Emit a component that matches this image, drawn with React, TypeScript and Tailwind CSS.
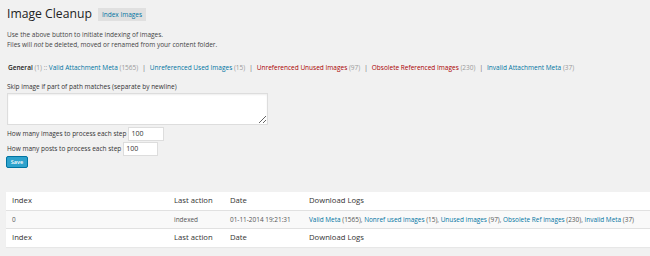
import React from 'react'

const font = { fontFamily: '"Open Sans", "Noto Sans", sans-serif' }

type Tab = { label: string; count: number; tone: 'blue' | 'red' }

const tabs: Tab[] = [
  { label: 'Unreferenced Used Images', count: 15, tone: 'blue' },
  { label: 'Unreferenced Unused Images', count: 97, tone: 'red' },
  { label: 'Obsolete Referenced Images', count: 230, tone: 'red' },
  { label: 'Invalid Attachment Meta', count: 37, tone: 'blue' },
]

const logs = [
  { label: 'Valid Meta', count: 1565 },
  { label: 'Nonref used images', count: 15 },
  { label: 'Unused images', count: 97 },
  { label: 'Obsolete Ref images', count: 230 },
  { label: 'Invalid Meta', count: 37 },
]

function HeaderRow() {
  return (
    <div className="grid grid-cols-[162px_56px_79px_1fr] h-[18px] items-center bg-white text-[7.7px] text-[#333]">
      <div className="pl-[6px]">Index</div>
      <div className="pl-[6px]">Last action</div>
      <div className="pl-[6px]">Date</div>
      <div className="pl-[6px]">Download Logs</div>
    </div>
  )
}

export default function App() {
  return (
    <div className="w-[650px] h-[256px] overflow-hidden bg-[#f1f1f1] text-[#444]" style={font}>
      {/* Title */}
      <div className="flex items-center pl-[7px] pt-[5px]">
        <h1 className="text-[12.2px] leading-[18px] text-[#222]">Image Cleanup</h1>
        <button className="ml-[6px] h-[13px] px-[4px] bg-[#e0e0e0] text-[6.5px] leading-[13px] text-[#0074a2]">
          Index Images
        </button>
      </div>

      {/* Intro */}
      <div className="pl-[7px] mt-[7px] text-[6.5px] leading-[10px] text-[#444]">
        <p>Use the above button to initiate indexing of images.</p>
        <p>
          Files will <em>not</em> be deleted, moved or renamed from your content folder.
        </p>
      </div>

      {/* Tabs */}
      <div className="pl-[8px] mt-[13px] text-[6.5px] leading-[10px] whitespace-nowrap">
        <span className="font-semibold text-[#222]">General</span>{' '}
        <span className="text-[#999]">(1)</span>
        <span className="text-[#999]"> :: </span>
        <span className="text-[#0074a2]">Valid Attachment Meta</span>{' '}
        <span className="text-[#999]">(1565)</span>
        {tabs.map((t) => (
          <span key={t.label}>
            <span className="mx-[4px] text-[#666]">|</span>
            <span className={t.tone === 'red' ? 'text-[#a00]' : 'text-[#0074a2]'}>{t.label}</span>{' '}
            <span className="text-[#999]">({t.count})</span>
          </span>
        ))}
      </div>

      {/* Form */}
      <div className="pl-[6px] mt-[9px] text-[6.5px] text-[#333]">
        <div className="pl-[1px] leading-[10px]">Skip image if part of path matches (separate by newline)</div>
        <textarea
          className="block w-[261px] h-[32px] mt-[1px] ml-[1px] bg-white border border-[#ddd] shadow-[inset_0_1px_2px_rgba(0,0,0,0.07)] resize"
          defaultValue=""
        />
        <div className="flex items-center mt-[1px] h-[15px]">
          <span className="pl-[1px]">How many images to process each step</span>
          <input
            className="ml-[2px] w-[36px] h-[14px] bg-white border border-[#ddd] px-[2px] text-[7px] text-[#333]"
            defaultValue="100"
          />
        </div>
        <div className="flex items-center h-[15px]">
          <span className="pl-[1px]">How many posts to process each step</span>
          <input
            className="ml-[2px] w-[35px] h-[14px] bg-white border border-[#ddd] px-[2px] text-[7px] text-[#333]"
            defaultValue="100"
          />
        </div>
        <button className="block w-[22px] h-[12px] rounded-[2px] bg-[#2ea2cc] border border-[#0074a2] text-white text-[5.5px] font-semibold leading-[10px]">
          Save
        </button>
      </div>

      {/* Table */}
      <div className="ml-[6px] mt-[24px] shadow-[0_1px_1px_rgba(0,0,0,0.04)]">
        <HeaderRow />
        <div className="grid grid-cols-[162px_56px_79px_1fr] h-[19px] items-center bg-[#f9f9f9] border-y border-[#e1e1e1] text-[6.45px] text-[#555] whitespace-nowrap">
          <div className="pl-[6px] text-[#555]">0</div>
          <div className="pl-[6px]">indexed</div>
          <div className="pl-[6px]">01-11-2014 19:21:31</div>
          <div className="pl-[6px]">
            {logs.map((l, i) => (
              <span key={l.label}>
                <span className="text-[#0074a2]">{l.label}</span> ({l.count})
                {i < logs.length - 1 ? ', ' : ''}
              </span>
            ))}
          </div>
        </div>
        <HeaderRow />
      </div>
    </div>
  )
}
